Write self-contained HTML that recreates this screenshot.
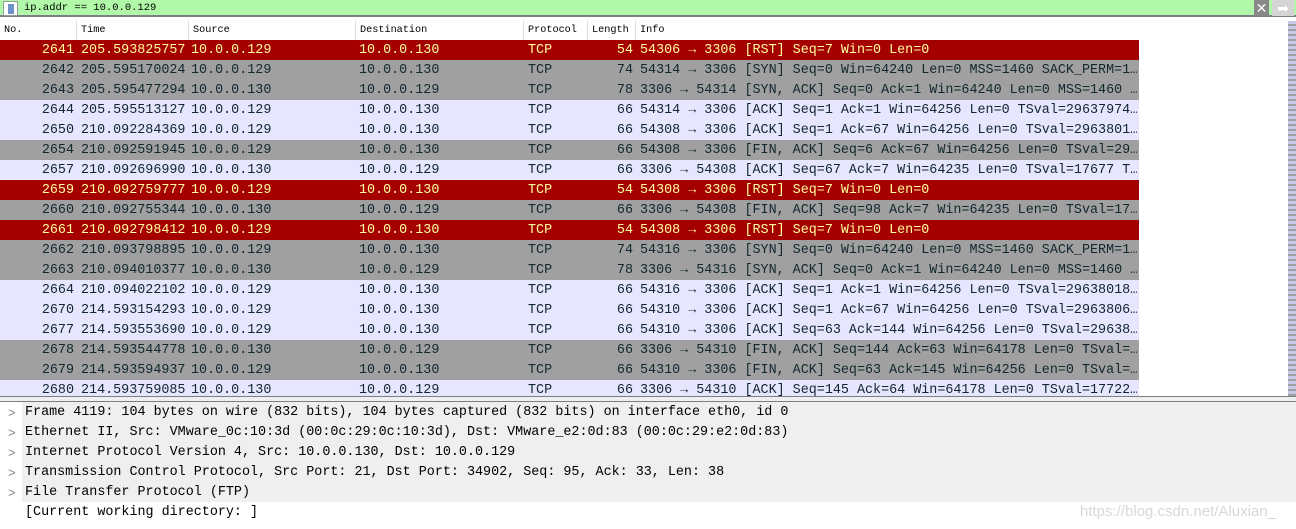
<!DOCTYPE html>
<html><head><meta charset="utf-8"><style>
*{margin:0;padding:0;box-sizing:border-box}
body{width:1296px;height:529px;overflow:hidden;background:#fff;font-family:"Liberation Mono",monospace;position:relative}
#filter{position:absolute;left:0;top:0;width:1296px;height:17px;background:#b1f9a9;border-bottom:2px solid #7a7f86}
#filter .bm{position:absolute;left:3px;top:1px;width:15px;height:15px;background:#fff;border:1px solid #999}
#filter .bm i{position:absolute;left:4px;top:2px;width:6px;height:10px;background:#6f93c8}
#filter .t{position:absolute;left:24px;top:1px;font-size:10.5px;line-height:14px;color:#000}
#filter .x{position:absolute;left:1254px;top:0;width:15px;height:16px;background:#888;color:#fff;font:14px/16px "Liberation Sans",sans-serif;text-align:center}
#filter .go{position:absolute;left:1272px;top:0;width:22px;height:16px;background:#d4d4d4;color:#fff;font:14px/16px "Liberation Sans",sans-serif;text-align:center}
#hdr{position:absolute;left:0;top:21px;width:1139px;height:19px;background:#fff;font-size:10.2px;line-height:20px;color:#000}
#hdr span{position:absolute;top:0;height:19px;padding-left:4px;border-right:1px solid #ddd}
#list{position:absolute;left:0;top:40px;width:1139px;height:356px;overflow:hidden}
.r{position:relative;height:20px;font-size:13.4px;line-height:21px;white-space:pre}
.r span{position:absolute;top:0}
.r span.i{width:497px;overflow:hidden}
.R{background:#a40000;color:#fffc9c}
.G{background:#a0a0a0;color:#12272e}
.L{background:#e7e6ff;color:#12272e}
#sb{position:absolute;left:1288px;top:21px;width:8px;height:376px;background:repeating-linear-gradient(#c8c8e8 0 3px,#a0a0a0 3px 5px)}
#sep{position:absolute;left:0;top:396px;width:1296px;height:6px;border-top:1px solid #7a7f86;border-bottom:1px solid #7a7f86;background:#f0f0f0}
#det{position:absolute;left:0;top:402px;width:1296px}
.d{position:relative;height:20px;font-size:13.4px;line-height:21px;white-space:pre;color:#000}
.d.g{background:linear-gradient(90deg,#fff 0 22px,#efefef 22px)}
.d b{position:absolute;left:8px;top:0;font-weight:normal;color:#888;font-family:"Liberation Sans",sans-serif;font-size:13px}
.d span{position:absolute;left:25px;top:0}
#wm{position:absolute;left:1080px;top:503px;font:15px/18px "Liberation Sans",sans-serif;color:#d8d8d8}
</style></head><body>
<div id="filter"><div class="bm"><i></i></div><div class="t">ip.addr == 10.0.0.129</div><div class="x">✕</div><div class="go">➡</div></div>
<div id="hdr">
<span style="left:0;width:77px">No.</span><span style="left:77px;width:112px">Time</span><span style="left:189px;width:167px">Source</span><span style="left:356px;width:168px">Destination</span><span style="left:524px;width:64px">Protocol</span><span style="left:588px;width:48px">Length</span><span style="left:636px;width:503px;border:none">Info</span>
</div>
<div id="list">
<script>
const rows=[
["R","2641","205.593825757","10.0.0.129","10.0.0.130","54","54306 → 3306 [RST] Seq=7 Win=0 Len=0"],
["G","2642","205.595170024","10.0.0.129","10.0.0.130","74","54314 → 3306 [SYN] Seq=0 Win=64240 Len=0 MSS=1460 SACK_PERM=1…"],
["G","2643","205.595477294","10.0.0.130","10.0.0.129","78","3306 → 54314 [SYN, ACK] Seq=0 Ack=1 Win=64240 Len=0 MSS=1460 …"],
["L","2644","205.595513127","10.0.0.129","10.0.0.130","66","54314 → 3306 [ACK] Seq=1 Ack=1 Win=64256 Len=0 TSval=29637974…"],
["L","2650","210.092284369","10.0.0.129","10.0.0.130","66","54308 → 3306 [ACK] Seq=1 Ack=67 Win=64256 Len=0 TSval=2963801…"],
["G","2654","210.092591945","10.0.0.129","10.0.0.130","66","54308 → 3306 [FIN, ACK] Seq=6 Ack=67 Win=64256 Len=0 TSval=29…"],
["L","2657","210.092696990","10.0.0.130","10.0.0.129","66","3306 → 54308 [ACK] Seq=67 Ack=7 Win=64235 Len=0 TSval=17677 T…"],
["R","2659","210.092759777","10.0.0.129","10.0.0.130","54","54308 → 3306 [RST] Seq=7 Win=0 Len=0"],
["G","2660","210.092755344","10.0.0.130","10.0.0.129","66","3306 → 54308 [FIN, ACK] Seq=98 Ack=7 Win=64235 Len=0 TSval=17…"],
["R","2661","210.092798412","10.0.0.129","10.0.0.130","54","54308 → 3306 [RST] Seq=7 Win=0 Len=0"],
["G","2662","210.093798895","10.0.0.129","10.0.0.130","74","54316 → 3306 [SYN] Seq=0 Win=64240 Len=0 MSS=1460 SACK_PERM=1…"],
["G","2663","210.094010377","10.0.0.130","10.0.0.129","78","3306 → 54316 [SYN, ACK] Seq=0 Ack=1 Win=64240 Len=0 MSS=1460 …"],
["L","2664","210.094022102","10.0.0.129","10.0.0.130","66","54316 → 3306 [ACK] Seq=1 Ack=1 Win=64256 Len=0 TSval=29638018…"],
["L","2670","214.593154293","10.0.0.129","10.0.0.130","66","54310 → 3306 [ACK] Seq=1 Ack=67 Win=64256 Len=0 TSval=2963806…"],
["L","2677","214.593553690","10.0.0.129","10.0.0.130","66","54310 → 3306 [ACK] Seq=63 Ack=144 Win=64256 Len=0 TSval=29638…"],
["G","2678","214.593544778","10.0.0.130","10.0.0.129","66","3306 → 54310 [FIN, ACK] Seq=144 Ack=63 Win=64178 Len=0 TSval=…"],
["G","2679","214.593594937","10.0.0.129","10.0.0.130","66","54310 → 3306 [FIN, ACK] Seq=63 Ack=145 Win=64256 Len=0 TSval=…"],
["L","2680","214.593759085","10.0.0.130","10.0.0.129","66","3306 → 54310 [ACK] Seq=145 Ack=64 Win=64178 Len=0 TSval=17722…"]];
for(const r of rows){document.write(`<div class="r ${r[0]}"><span style="right:1065px">${r[1]}</span><span style="left:81px">${r[2]}</span><span style="left:191px">${r[3]}</span><span style="left:359px">${r[4]}</span><span style="left:528px">TCP</span><span style="right:506px">${r[5]}</span><span class="i" style="left:640px">${r[6]}</span></div>`)}
</script>
</div>
<div id="sb"></div>
<div id="sep"></div>
<div id="det">
<div class="d g"><b>&gt;</b><span>Frame 4119: 104 bytes on wire (832 bits), 104 bytes captured (832 bits) on interface eth0, id 0</span></div>
<div class="d g"><b>&gt;</b><span>Ethernet II, Src: VMware_0c:10:3d (00:0c:29:0c:10:3d), Dst: VMware_e2:0d:83 (00:0c:29:e2:0d:83)</span></div>
<div class="d g"><b>&gt;</b><span>Internet Protocol Version 4, Src: 10.0.0.130, Dst: 10.0.0.129</span></div>
<div class="d g"><b>&gt;</b><span>Transmission Control Protocol, Src Port: 21, Dst Port: 34902, Seq: 95, Ack: 33, Len: 38</span></div>
<div class="d g"><b>&gt;</b><span>File Transfer Protocol (FTP)</span></div>
<div class="d"><span>[Current working directory: ]</span></div>
</div>
<div id="wm">https://blog.csdn.net/Aluxian_</div>
</body></html>
